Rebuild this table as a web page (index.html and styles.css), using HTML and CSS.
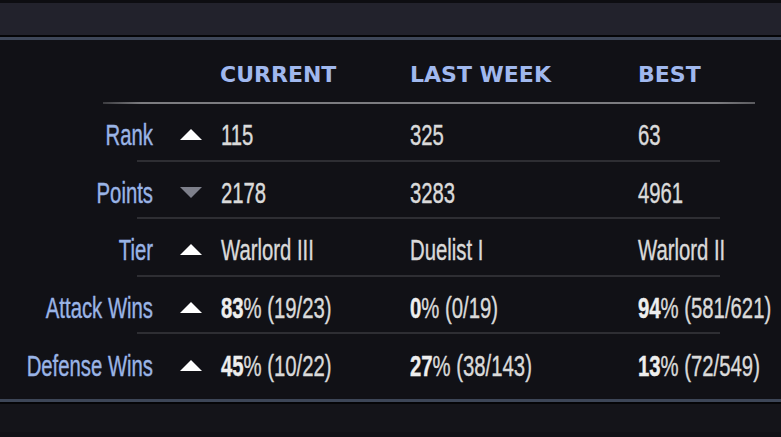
FILE: index.html
```html
<!DOCTYPE html>
<html lang="en">
<head>
    <meta charset="UTF-8">
    <meta name="viewport" content="width=device-width, initial-scale=1.0">
    <title>Ranking Stats</title>
    <link rel="stylesheet" href="styles.css">
</head>
<body>
    <div class="top-bar"></div>

    <div class="stats">
        <!-- Column headers -->
        <div class="stats-head">
            <span class="col-current">CURRENT</span>
            <span class="col-last">LAST WEEK</span>
            <span class="col-best">BEST</span>
        </div>

        <div class="stats-row">
            <span class="label">Rank</span>
            <span class="trend"><i class="arrow up"></i></span>
            <span class="col-current">115</span>
            <span class="col-last">325</span>
            <span class="col-best">63</span>
        </div>

        <div class="stats-row">
            <span class="label">Points</span>
            <span class="trend"><i class="arrow down"></i></span>
            <span class="col-current">2178</span>
            <span class="col-last">3283</span>
            <span class="col-best">4961</span>
        </div>

        <div class="stats-row">
            <span class="label">Tier</span>
            <span class="trend"><i class="arrow up"></i></span>
            <span class="col-current">Warlord III</span>
            <span class="col-last">Duelist I</span>
            <span class="col-best">Warlord II</span>
        </div>

        <div class="stats-row">
            <span class="label">Attack Wins</span>
            <span class="trend"><i class="arrow up"></i></span>
            <span class="col-current"><b>83</b>% (19/23)</span>
            <span class="col-last"><b>0</b>% (0/19)</span>
            <span class="col-best"><b>94</b>% (581/621)</span>
        </div>

        <div class="stats-row last">
            <span class="label">Defense Wins</span>
            <span class="trend"><i class="arrow up"></i></span>
            <span class="col-current"><b>45</b>% (10/22)</span>
            <span class="col-last"><b>27</b>% (38/143)</span>
            <span class="col-best"><b>13</b>% (72/549)</span>
        </div>
    </div>

    <div class="bottom-bar"></div>
</body>
</html>
```

FILE: styles.css
```css
body {
    margin: 0;
    padding: 0;
    background-color: #111116;
    font-family: "Liberation Sans", Arial, sans-serif;
    overflow: hidden;
}

.top-bar {
    height: 32px;
    background-color: #22222c;
    border-top: 3px solid #0d0d11;
    border-bottom: 2px solid #050507;
    box-shadow: 0 3px 0 #3e4759;
}

.stats {
    height: 359px;
    padding-top: 3px;
}

.stats-head {
    display: flex;
    align-items: center;
    height: 64px;
    margin-left: 103px;
    width: 652px;
    padding: 6px 0 0 117px;
    box-sizing: border-box;
    border-bottom: 2px solid transparent;
    border-image: linear-gradient(to right, #3a3a3e, #7c7c80 6%, #7c7c80 94%, #5a5a5e) 1;
    font-family: "DejaVu Sans", sans-serif;
    font-weight: bold;
    font-size: 22px;
    color: #a0b8ee;
}

.stats-head .col-current { width: 190px; }
.stats-head .col-last { width: 228px; }

.stats-row {
    display: flex;
    align-items: center;
    height: 57.5px;
    padding-top: 8px;
    box-sizing: border-box;
    margin-left: 137px;
    width: 583px;
    border-bottom: 2px solid #2e2e33;
    font-size: 29px;
    color: #dadada;
    white-space: nowrap;
    -webkit-text-stroke: 0.4px currentColor;
}

.stats-row.last {
    border-bottom: none;
}

/* the game font is a narrow face, squeeze the text to match;
   label box ends at x=153 whatever its width */
.label {
    flex: none;
    width: 200px;
    margin-left: -184px;
    text-align: right;
    color: #9ab4e6;
    transform: scaleX(0.7);
    transform-origin: right center;
}

.trend {
    flex: none;
    width: 68px;
    padding: 0 0 2px 27px;
    box-sizing: border-box;
    display: flex;
}

.arrow {
    width: 0;
    height: 0;
    border-left: 11px solid transparent;
    border-right: 11px solid transparent;
}

.arrow.up {
    border-bottom: 11px solid #ffffff;
}

.arrow.down {
    border-top: 11px solid #7e808b;
}

.stats-row .col-current,
.stats-row .col-last,
.stats-row .col-best {
    flex: none;
    transform: scaleX(0.7);
    transform-origin: left center;
}

.stats-row .col-current { width: 189px; }
.stats-row .col-last { width: 228px; }

.stats-row b {
    color: #eeeeee;
}

.bottom-bar {
    height: 30px;
    background-color: #141419;
    border-top: 3px solid #3d4657;
    box-shadow: inset 0 2px 0 #050507;
}
```
